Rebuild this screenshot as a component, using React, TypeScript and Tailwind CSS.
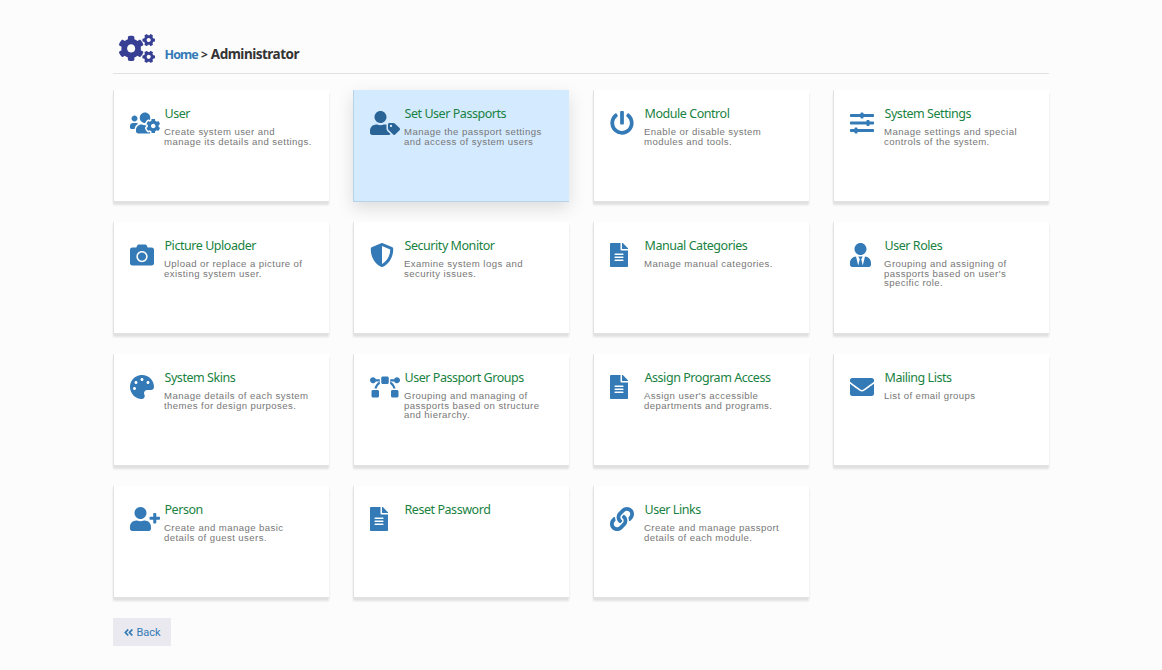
import type { IconType } from 'react-icons';
import {
  FaAngleDoubleLeft, FaBezierCurve, FaCamera, FaCogs, FaEnvelope, FaFileAlt, FaLink, FaPalette,
  FaPowerOff, FaShieldAlt, FaSlidersH, FaUserPlus, FaUsersCog, FaUserTag, FaUserTie,
} from 'react-icons/fa';

type Module = { name: string; lines: string[]; icon: IconType; size?: string; active?: boolean };

const modules: Module[] = [
  { name: 'User', lines: ['Create system user and', 'manage its details and settings.'], icon: FaUsersCog, size: 'w-[30px]' },
  { name: 'Set User Passports', lines: ['Manage the passport settings', 'and access of system users'], icon: FaUserTag, size: 'w-[30px]', active: true },
  { name: 'Module Control', lines: ['Enable or disable system', 'modules and tools.'], icon: FaPowerOff },
  { name: 'System Settings', lines: ['Manage settings and special', 'controls of the system.'], icon: FaSlidersH },
  { name: 'Picture Uploader', lines: ['Upload or replace a picture of', 'existing system user.'], icon: FaCamera },
  { name: 'Security Monitor', lines: ['Examine system logs and', 'security issues.'], icon: FaShieldAlt },
  { name: 'Manual Categories', lines: ['Manage manual categories.'], icon: FaFileAlt, size: 'w-[18px]' },
  { name: 'User Roles', lines: ['Grouping and assigning of', "passports based on user's", 'specific role.'], icon: FaUserTie, size: 'w-[21px]' },
  { name: 'System Skins', lines: ['Manage details of each system', 'themes for design purposes.'], icon: FaPalette },
  { name: 'User Passport Groups', lines: ['Grouping and managing of', 'passports based on structure', 'and hierarchy.'], icon: FaBezierCurve, size: 'w-[30px]' },
  { name: 'Assign Program Access', lines: ["Assign user's accessible", 'departments and programs.'], icon: FaFileAlt, size: 'w-[18px]' },
  { name: 'Mailing Lists', lines: ['List of email groups'], icon: FaEnvelope },
  { name: 'Person', lines: ['Create and manage basic', 'details of guest users.'], icon: FaUserPlus, size: 'w-[30px]' },
  { name: 'Reset Password', lines: [], icon: FaFileAlt, size: 'w-[18px]' },
  { name: 'User Links', lines: ['Create and manage passport', 'details of each module.'], icon: FaLink },
];

function ModuleCard({ name, lines, icon: Icon, size = 'w-6', active }: Module) {
  return (
    <a
      className={`flex h-28 border-l border-b pl-4 cursor-pointer ${
        active
          ? 'bg-[#d4eaff] border-[#b5d3ea] shadow-[0_6px_16px_rgba(0,0,0,0.13)]'
          : 'bg-white border-[#e2e2e2] shadow-[0_3px_2px_rgba(0,0,0,0.11)]'
      }`}
    >
      <div className="w-[34px] shrink-0 pt-[21px]">
        <Icon className={`h-6 ${size} ${active ? 'text-[#2a6496]' : 'text-[#337ab7]'}`} />
      </div>
      <div className="pt-4 whitespace-nowrap">
        <h2 className="pl-[0.5px] font-['Noto_Sans',sans-serif] text-[12.5px] leading-4 tracking-[-0.45px] text-[#198241]">{name}</h2>
        <p className="mt-[5px] font-['Liberation_Sans',Arial,sans-serif] text-[9.6px] leading-[9.6px] tracking-[0.42px] text-[#777777]">
          {lines.map((line) => (
            <span key={line} className="block">{line}</span>
          ))}
        </p>
      </div>
    </a>
  );
}

export default function App() {
  return (
    <div className="min-h-screen bg-[#fcfcfc] px-[113px] pt-[34px] font-['Roboto',sans-serif]">
      <header className="flex h-10 border-b border-[#e2e2e2]">
        <FaCogs className="h-[29px] w-[36px] ml-1.5 text-[#373f94]" />
        <nav className="ml-[9.5px] mt-3 flex items-baseline gap-[3px] font-['Noto_Sans',sans-serif] font-bold leading-4 text-[#333333]">
          <a className="text-[12.5px] tracking-[-0.9px] text-[#337ab7]">Home</a>
          <span className="text-[12px]">&gt;</span>
          <span className="text-[13.5px] tracking-[-0.5px]">Administrator</span>
        </nav>
      </header>
      <main className="mt-4 grid grid-cols-4 gap-x-6 gap-y-5">
        {modules.map((m) => (
          <ModuleCard key={m.name} {...m} />
        ))}
      </main>
      <button className="mt-5 flex h-7 w-[58px] items-center justify-center gap-[2px] bg-[#e9e9ef] text-[11px] text-[#337ab7]">
        <FaAngleDoubleLeft className="size-[11px]" />
        <span className="pt-0.5">Back</span>
      </button>
    </div>
  );
}
